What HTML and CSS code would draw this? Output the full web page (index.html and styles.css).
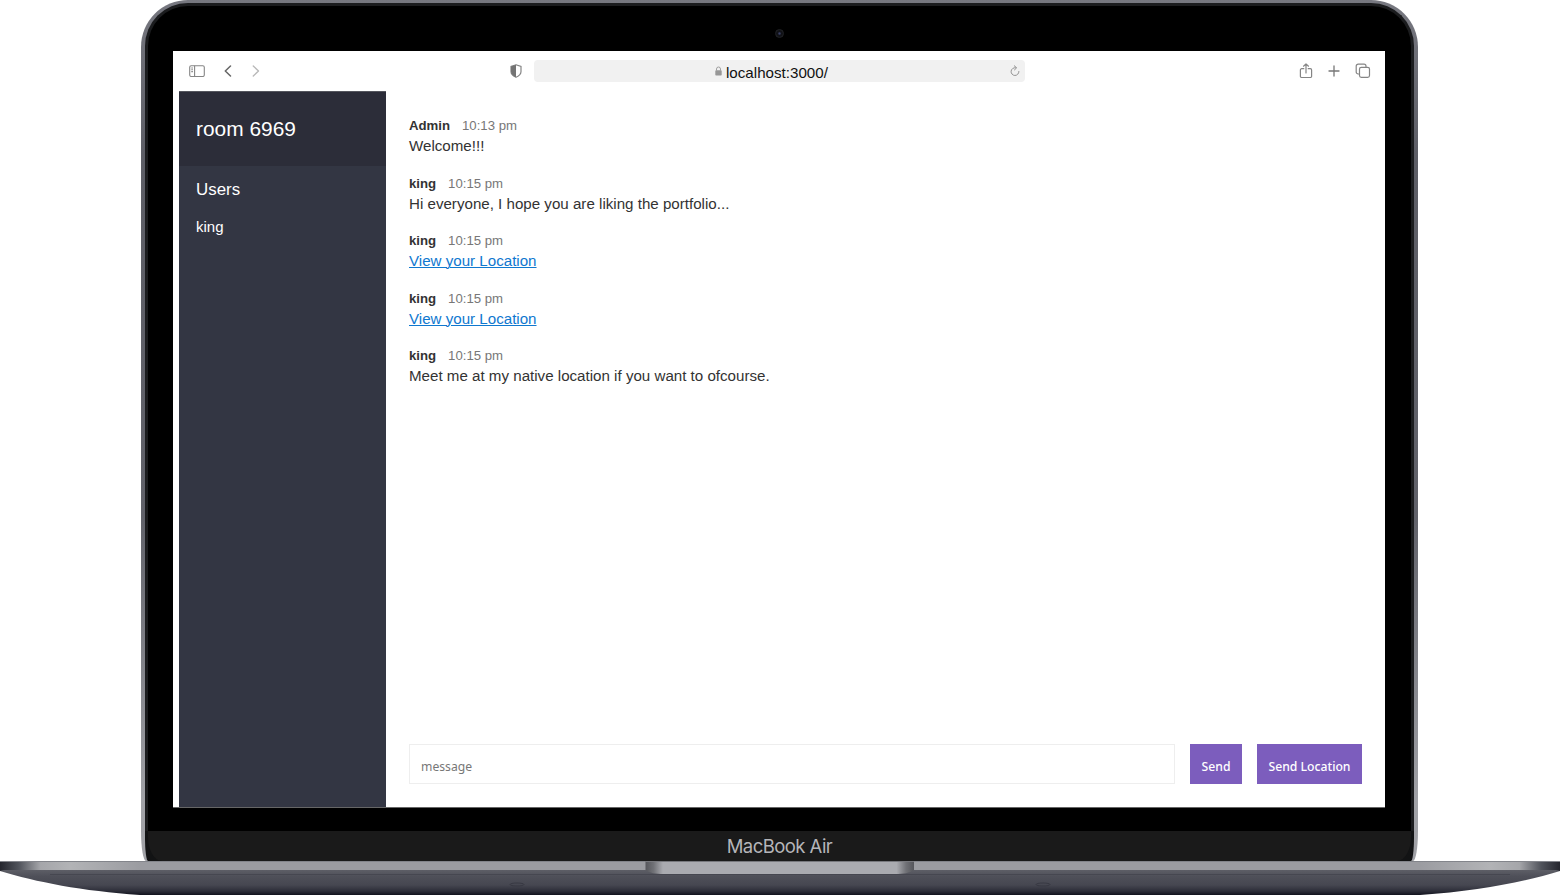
FILE: index.html
```html
<!DOCTYPE html>
<html lang="en">
<head>
<meta charset="utf-8">
<title>Chat App</title>
<link rel="stylesheet" href="styles.css">
</head>
<body>
<div class="laptop">
  <div class="lid">
    <div class="bezel">
      <div class="camera-row"><span class="camera"></span></div>
      <div class="screen">
        <header class="toolbar">
          <div class="tools-left">
            <svg width="16" height="12" viewBox="0 0 16 12" fill="none" stroke="#858585" stroke-width="1.1"><rect x=".7" y=".7" width="14.6" height="10.800" rx="1.500"/><path d="M5.600 .7v10.800M2.300 3h1.600M2.300 4.800h1.600M2.300 6.600h1.600"/></svg>
            <svg class="back" width="8" height="12" viewBox="0 0 8 12" fill="none" stroke="#666" stroke-width="1.5" stroke-linecap="round" stroke-linejoin="round"><path d="M6.500 1L1.300 6l5.200 5"/></svg>
            <svg class="forward" width="8" height="12" viewBox="0 0 8 12" fill="none" stroke="#b9b9b9" stroke-width="1.4" stroke-linecap="round" stroke-linejoin="round"><path d="M1.300 1l5.200 5-5.200 5"/></svg>
          </div>
          <svg class="shield" width="12" height="14" viewBox="0 0 12 14"><path d="M6 .8l5 1.700v5c0 2.700-2 4.500-5 5.800-3-1.300-5-3.100-5-5.800v-5z" fill="#fff" stroke="#858585" stroke-width="1.200"/><path d="M6 .8v12.500c-3-1.300-5-3.100-5-5.800v-5z" fill="#747474"/></svg>
          <div class="address">
            <svg class="lock" width="7" height="10" viewBox="0 0 7 10"><path d="M1.500 4.500V3a2 2 0 0 1 4 0v1.500" fill="none" stroke="#a0a0a0"/><rect x=".3" y="4.200" width="6.400" height="5.300" rx=".8" fill="#979797"/></svg>
            <span>localhost:3000/</span>
            <svg class="reload" width="10" height="12" viewBox="0 0 10 12" fill="none" stroke="#929292" stroke-width="1" stroke-linecap="round"><path d="M5.500 2.700a3.900 3.900 0 1 0 3.400 3.800M4.300 .8l2.400 2-2.200 2.100"/></svg>
          </div>
          <div class="tools-right">
            <svg width="14" height="16" viewBox="0 0 14 16" fill="none" stroke="#858585" stroke-width="1.2" stroke-linecap="round" stroke-linejoin="round"><path d="M4.800 5.700H2.700a1.300 1.300 0 0 0-1.300 1.300v6.200a1.300 1.300 0 0 0 1.300 1.300h8.600a1.300 1.300 0 0 0 1.300-1.300V7a1.300 1.300 0 0 0-1.300-1.300H9.200M7 10V.9M4.500 3.200L7 .9l2.500 2.300"/></svg>
            <svg width="12" height="12" viewBox="0 0 12 12" stroke="#777" stroke-width="1.3" stroke-linecap="round"><path d="M6 1v10M1 6h10"/></svg>
            <svg width="16" height="16" viewBox="0 0 16 16" fill="none" stroke="#858585" stroke-width="1.2"><path d="M4.500 11H3.200a2 2 0 0 1-2-2V3.200a2 2 0 0 1 2-2H9a2 2 0 0 1 2 2v1"/><rect x="4.500" y="4.300" width="10" height="10" rx="1.800"/></svg>
          </div>
        </header>
        <div class="chat">
          <aside class="sidebar">
            <h2 class="room">room 6969</h2>
            <h3 class="list-title">Users</h3>
            <ul class="users"><li>king</li></ul>
          </aside>
          <main class="main">
            <div class="messages">
              <div class="message"><p class="meta"><b>Admin</b><span>10:13 pm</span></p><p class="body">Welcome!!!</p></div>
              <div class="message"><p class="meta"><b>king</b><span>10:15 pm</span></p><p class="body">Hi everyone, I hope you are liking the portfolio...</p></div>
              <div class="message"><p class="meta"><b>king</b><span>10:15 pm</span></p><p class="body"><a href="#">View your Location</a></p></div>
              <div class="message"><p class="meta"><b>king</b><span>10:15 pm</span></p><p class="body"><a href="#">View your Location</a></p></div>
              <div class="message"><p class="meta"><b>king</b><span>10:15 pm</span></p><p class="body">Meet me at my native location if you want to ofcourse.</p></div>
            </div>
            <form class="compose">
              <input class="field" type="text" placeholder="message">
              <button class="btn send" type="button">Send</button>
              <button class="btn locate" type="button">Send Location</button>
            </form>
          </main>
        </div>
      </div>
    </div>
    <div class="chin"><div class="chin-face">MacBook Air</div></div>
  </div>
  <svg class="base" width="1560" height="34" viewBox="0 0 1560 34">
    <defs>
      <linearGradient id="under" x1="0" y1="0" x2="0" y2="1"><stop offset="0" stop-color="#5d5e66"/><stop offset=".25" stop-color="#4f5059"/><stop offset=".6" stop-color="#464751"/><stop offset=".85" stop-color="#2c2d38"/><stop offset="1" stop-color="#11121d"/></linearGradient>
      <linearGradient id="edge" x1="0" x2="1" y1="0" y2="0"><stop offset="0" stop-color="#25262e"/><stop offset=".012" stop-color="#50535b"/><stop offset=".026" stop-color="#a5a6aa"/><stop offset=".045" stop-color="#b2b3b6"/><stop offset=".09" stop-color="#9b9ca1"/><stop offset=".91" stop-color="#9b9ca1"/><stop offset=".955" stop-color="#b2b3b6"/><stop offset=".974" stop-color="#a5a6aa"/><stop offset=".988" stop-color="#50535b"/><stop offset="1" stop-color="#25262e"/></linearGradient>
      <linearGradient id="notch" x1="0" x2="1" y1="0" y2="0"><stop offset="0" stop-color="#55565b"/><stop offset=".03" stop-color="#707176"/><stop offset=".065" stop-color="#aaabb0"/><stop offset=".935" stop-color="#aaabb0"/><stop offset=".97" stop-color="#707176"/><stop offset="1" stop-color="#55565b"/></linearGradient>
    </defs>
    <path d="M0 9V10C36 21 82 30 140 34H1420C1478 30 1524 21 1560 10V9z" fill="url(#under)"/>
    <path d="M0 0H1560V10L1556 9H4L0 10z" fill="url(#edge)"/>
    <path d="M0 .5H1560" stroke="#83858b"/>
    <path d="M50 13.500H1510" stroke="#464750"/>
    <path d="M645.500 0H914V9C909 12 904 13 895 13H664C655 13 650 12 645.500 9z" fill="url(#notch)"/>
    <path d="M645 .5H914" stroke="#77787d"/>
    <g fill="none" stroke="#383943"><ellipse cx="517" cy="23.500" rx="7" ry="1.500"/><ellipse cx="1043" cy="23.500" rx="7" ry="1.500"/></g>
  </svg>
</div>
</body>
</html>
```
FILE: styles.css
```css
* { box-sizing: border-box; }
body { margin: 0; background: #fff; font-family: "Liberation Sans", Arial, sans-serif; overflow: hidden; }
h2, h3, p, ul { margin: 0; padding: 0; font-weight: 400; list-style: none; }
svg { display: block; flex: none; }
.laptop { width: 1560px; height: 895px; display: flex; flex-direction: column; align-items: center; }
.lid {
  width: 1277px; height: 861px; margin-right: 1px; padding: 3px 4px 0;
  background: linear-gradient(#777880, #5d5e66 18%, #61626a 60%, #a1a2a7 93%);
  border-radius: 47px 47px 5px 5px / 47px 47px 30px 30px;
  display: flex; flex-direction: column;
}
.bezel {
  height: 828px; background: #000; border: 3px solid #1b1c1e; border-bottom: 0;
  border-radius: 43px 43px 0 0; display: flex; flex-direction: column; align-items: center;
}
.camera-row { height: 45px; padding-top: 23px; }
.camera { display: block; width: 9px; height: 9px; border-radius: 50%; border: 1px solid #222326; background: radial-gradient(#394067 0 12%, #101116 35%); }
.screen { width: 1212px; height: 756px; background: #fff; border-bottom: 0; box-shadow: 0 1px #666; display: flex; flex-direction: column; margin-right: 1px; }
.chin { height: 30px; padding: 0 3px; background: #121314; border-radius: 0 0 3px 3px / 0 0 24px 24px; }
.chin-face {
  height: 30px; background: #1a1a1a; border-radius: 0 0 14px 14px / 0 0 24px 24px;
  color: #b5b5b9; text-align: center; font: 18.500px/31px Inter, sans-serif; letter-spacing: -.55px;
}
.toolbar { height: 40px; display: flex; align-items: center; padding: 0 14px 0 16px; }
.tools-left { display: flex; align-items: center; width: 321px; }
.tools-left, .shield { margin-top: -1px; }
.back { margin-left: 19px; }
.forward { margin-left: 20px; }
.address { width: 491px; height: 22px; margin-left: 12px; padding: 0 5px 0 181px; border-radius: 4px; background: #f1f1f1; display: flex; align-items: center; font-size: 15.150px; color: #111; }
.address span { margin-left: 4px; padding-top: 2px; }
.reload { margin-left: auto; margin-top: -1px; }
.tools-right { margin: -1px 0 0 auto; display: flex; align-items: center; gap: 15px; }
.chat { flex: 1; display: flex; padding-left: 6px; }
.sidebar { width: 207px; background: #333643; border-top: 1px solid #55565e; color: #fff; }
.room { height: 74px; padding: 0 17px; line-height: 74px; font-size: 20.900px; background: #2c2d39; }
.list-title { padding: 14px 17px 0; font-size: 16.900px; line-height: 20px; }
.users { padding: 17px 17px 0; font-size: 15px; line-height: 20px; }
.main { flex: 1; padding: 25px 23px 23px; display: flex; flex-direction: column; }
.messages { flex: 1; }
.message { height: 57.600px; color: #333; }
.meta { display: flex; gap: 12px; font-size: 13.200px; line-height: 20px; color: #777; }
.meta b { color: #333; }
.body { font-size: 15.130px; line-height: 20.600px; }
.body a { color: #0f78cf; text-underline-offset: 1px; text-decoration-thickness: 1px; }
.compose { display: flex; height: 40px; }
.field { width: 766px; height: 40px; padding: 4px 11px 0; border: 1px solid #eee; font: 12.200px "Noto Sans", sans-serif; }
.field::placeholder { color: #777; }
.btn { height: 40px; padding: 4px 0 0; border: 0; margin-left: 15px; background: #7c5dbd; color: #fff; font: 500 12.200px "Noto Sans", sans-serif; }
.send { width: 52px; }
.locate { width: 105px; }
```
